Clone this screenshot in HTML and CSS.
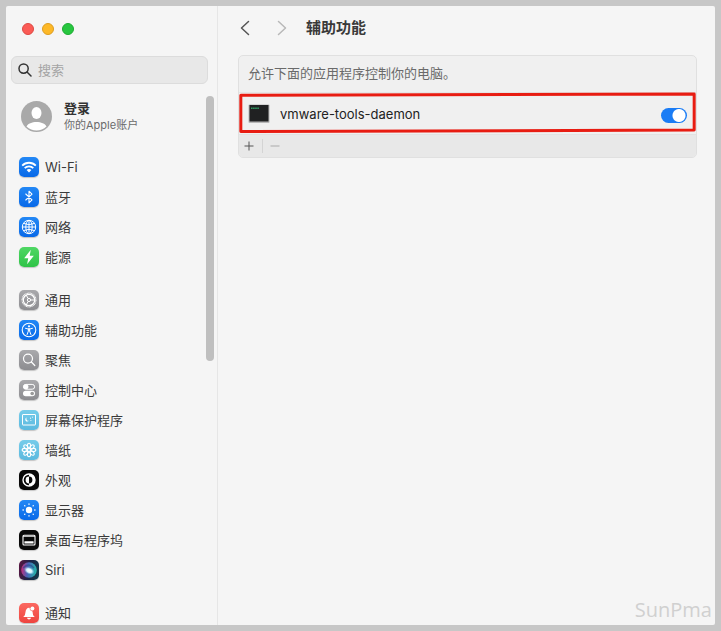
FILE: index.html
```html
<!DOCTYPE html>
<html lang="zh-CN">
<head>
    <meta charset="UTF-8">
    <meta name="viewport" content="width=device-width, initial-scale=1.0">
    <title>辅助功能</title>
    <link rel="stylesheet" href="styles.css">
</head>
<body>
    <div class="window">
        <aside class="sidebar">
            <div class="lights">
                <button class="light red" aria-label="关闭"></button>
                <button class="light yellow" aria-label="最小化"></button>
                <button class="light green" aria-label="缩放"></button>
            </div>

            <label class="search">
                <svg width="14" height="14" viewBox="0 0 14 14" fill="none" stroke="#333" stroke-width="1.5" stroke-linecap="round"><circle cx="5.6" cy="5.6" r="4.6"/><path d="M9 9l4 4"/></svg>
                <input type="search" placeholder="搜索" aria-label="搜索">
            </label>

            <div class="list">
                <a class="account" href="#">
                    <svg width="31" height="31" viewBox="0 0 31 31">
                        <circle cx="15.5" cy="15.5" r="15.5" fill="#a9a9a9"/>
                        <ellipse cx="15.5" cy="12" rx="5" ry="6" fill="#fff"/>
                        <path d="M5.5 25.5C8 19.500 23 19.500 25.500 25.500C20 30.700 11 30.700 5.500 25.500z" fill="#fff"/>
                    </svg>
                    <span class="account-text">
                        <b>登录</b>
                        <small>你的Apple账户</small>
                    </span>
                </a>

                <nav class="group">
                    <a class="item" href="#">
                        <svg class="icon blue" viewBox="0 0 20 20" fill="none" stroke="#fff" stroke-width="1.8"><path d="M3.200 8.600a9.500 9.500 0 0 1 13.600 0M5.700 11.200a6 6 0 0 1 8.600 0"/><path d="M10 15.600l-2.400-2.500a3.400 3.400 0 0 1 4.800 0z" fill="#fff" stroke="none"/></svg>
                        <span>Wi-Fi</span>
                    </a>
                    <a class="item" href="#">
                        <svg class="icon blue" viewBox="0 0 20 20" fill="none" stroke="#fff" stroke-width="1.100" stroke-linejoin="round" stroke-linecap="round"><path d="M6.800 7l6.200 5.900-3 2.900V4.200l3 2.900L6.800 13"/></svg>
                        <span>蓝牙</span>
                    </a>
                    <a class="item" href="#">
                        <svg class="icon blue" viewBox="0 0 20 20" fill="none" stroke="#fff" stroke-width="1"><circle cx="10" cy="10" r="6.700"/><ellipse cx="10" cy="10" rx="3.200" ry="6.700"/><path d="M10 3.300v13.400M3.300 10h13.400M4.500 6.400q5.500 2.600 11 0M4.500 13.600q5.500-2.600 11 0"/></svg>
                        <span>网络</span>
                    </a>
                    <a class="item" href="#">
                        <svg class="icon lime" viewBox="0 0 20 20" fill="#fff"><path d="M11.800 2.800L5.200 11.200h4l-1.100 6L14.800 8.800h-4.100z"/></svg>
                        <span>能源</span>
                    </a>
                </nav>

                <nav class="group">
                    <a class="item" href="#">
                        <svg class="icon gray" viewBox="0 0 20 20" fill="none" stroke="#fff"><circle cx="10" cy="10" r="6.900" stroke-width="1.100" stroke-dasharray="0.900 0.540"/><circle cx="10" cy="10" r="5.700" stroke-width="1.200"/><circle cx="10" cy="10" r="1.600"/><path d="M11.600 10h4M9.200 8.600L7.200 5.100M9.200 11.400l-2 3.500"/></svg>
                        <span>通用</span>
                    </a>
                    <a class="item" href="#">
                        <svg class="icon blue" viewBox="0 0 20 20" fill="none" stroke="#fff" stroke-linecap="round"><circle cx="10" cy="10" r="6.800" stroke-width="1.100"/><circle cx="10" cy="6.300" r="1.100" fill="#fff" stroke="none"/><path d="M6.500 8.300l2.400.6h2.200l2.400-.6M9.300 9v2.200l-1.200 3.300M10.700 9v2.200l1.200 3.300M10 9v2"/></svg>
                        <span>辅助功能</span>
                    </a>
                    <a class="item" href="#">
                        <svg class="icon gray" viewBox="0 0 20 20" fill="none" stroke="#fff" stroke-width="1.200" stroke-linecap="round"><circle cx="9" cy="8.600" r="4.500"/><path d="M12.400 12l3.400 3.500"/></svg>
                        <span>聚焦</span>
                    </a>
                    <a class="item" href="#">
                        <svg class="icon gray" viewBox="0 0 20 20"><rect x="4.400" y="4.400" width="11.200" height="4.800" rx="2.400" fill="none" stroke="#fff"/><circle cx="6.900" cy="6.800" r="2.500" fill="#fff"/><rect x="4" y="10.800" width="12" height="5.400" rx="2.700" fill="#fff"/><circle cx="13.200" cy="13.500" r="1.800" fill="#999"/></svg>
                        <span>控制中心</span>
                    </a>
                    <a class="item" href="#">
                        <svg class="icon sky" viewBox="0 0 20 20" fill="none" stroke="#fff"><rect x="3.500" y="4.500" width="13" height="10.500" rx="0.500"/><path d="M7.700 7.500a2.100 2.100 0 1 0 2.300 3.300 2.200 2.200 0 0 1-2.300-3.300z" fill="#fff" stroke="none"/><path d="M11 8.200h1M13 7.200h.8M11.500 10.500h.8"/></svg>
                        <span>屏幕保护程序</span>
                    </a>
                    <a class="item" href="#">
                        <svg class="icon sky" viewBox="0 0 20 20" fill="none" stroke="#fff" stroke-width="1.100"><circle cx="10" cy="10" r="1.500"/><g><ellipse cx="10" cy="5.700" rx="1.600" ry="2.500"/><ellipse cx="10" cy="14.300" rx="1.600" ry="2.500"/><ellipse cx="5.700" cy="10" rx="2.500" ry="1.600"/><ellipse cx="14.300" cy="10" rx="2.500" ry="1.600"/></g><g transform="rotate(45 10 10)"><ellipse cx="10" cy="5.700" rx="1.600" ry="2.500"/><ellipse cx="10" cy="14.300" rx="1.600" ry="2.500"/><ellipse cx="5.700" cy="10" rx="2.500" ry="1.600"/><ellipse cx="14.300" cy="10" rx="2.500" ry="1.600"/></g></svg>
                        <span>墙纸</span>
                    </a>
                    <a class="item" href="#">
                        <svg class="icon black" viewBox="0 0 20 20"><circle cx="10" cy="10" r="6" fill="none" stroke="#fff" stroke-width="1.400"/><path d="M10 4a6 6 0 0 1 0 12v-2.600a3.400 3.400 0 0 0 0-6.800z" fill="#fff"/><path d="M10 6.600a3.400 3.400 0 0 0 0 6.800z" fill="#fff"/></svg>
                        <span>外观</span>
                    </a>
                    <a class="item" href="#">
                        <svg class="icon blue" viewBox="0 0 20 20" stroke="#fff" stroke-width="1.300" stroke-linecap="round"><circle cx="10" cy="10" r="3.200" fill="#fff" stroke="none"/><path d="M10 4v.3M10 15.700v.3M4 10h.3M15.700 10h.3M5.700 5.700l.2.200M14.100 14.100l.2.200M5.700 14.300l.2-.2M14.100 5.900l.2-.2"/></svg>
                        <span>显示器</span>
                    </a>
                    <a class="item" href="#">
                        <svg class="icon black" viewBox="0 0 20 20"><rect x="4" y="5.200" width="12" height="9.800" rx="1" fill="none" stroke="#fff" stroke-width="1.100"/><path d="M4 6.500h12" stroke="#fff" stroke-width="0.700"/><rect x="5.400" y="11.200" width="9.200" height="2.400" rx="0.500" fill="#fff"/></svg>
                        <span>桌面与程序坞</span>
                    </a>
                    <a class="item" href="#">
                        <svg class="icon siri" viewBox="0 0 20 20">
                            <defs>
                                <linearGradient id="orb" x1="0" y1="0.500" x2="1" y2="0.600"><stop offset="0" stop-color="#c22e7c"/><stop offset="0.400" stop-color="#4a62b8"/><stop offset="1" stop-color="#22b9a8"/></linearGradient>
                                <radialGradient id="glow"><stop offset="0" stop-color="#fff"/><stop offset="0.500" stop-color="#d7f3ff"/><stop offset="1" stop-color="#8fdcf5" stop-opacity="0"/></radialGradient>
                            </defs>
                            <circle cx="10" cy="10" r="7.800" fill="url(#orb)"/>
                            <path d="M4 8q6-6 11 0" fill="none" stroke="#254a8c" stroke-width="1.500" opacity=".6"/>
                            <ellipse cx="10.500" cy="10.500" rx="5.500" ry="3.600" fill="url(#glow)" transform="rotate(25 10 10)"/>
                        </svg>
                        <span>Siri</span>
                    </a>
                </nav>

                <nav class="group">
                    <a class="item" href="#">
                        <svg class="icon coral" viewBox="0 0 20 20" fill="#fff"><path d="M4.200 14c1.800-1.300 1.900-2.600 2.300-5 .3-2.600 1.600-4.200 3.500-4.200s3.300 1.600 3.600 4.200c.3 2.400.4 3.700 2.200 5z"/><path d="M7.900 14.800h4.200q-.5 1.800-2.100 1.800t-2.100-1.800z"/><circle cx="13.400" cy="5.500" r="2.200"/><circle cx="13.400" cy="5.500" r="2.400" fill="none" stroke="#f5554e" stroke-width="0.600"/></svg>
                        <span>通知</span>
                    </a>
                </nav>
            </div>
            <div class="thumb"></div>
        </aside>

        <main class="content">
            <header class="toolbar">
                <button class="nav-btn" aria-label="返回"><svg width="10" height="16" viewBox="0 0 10 16"><path d="M8.500 1.500L1.500 8l7 6.500"/></svg></button>
                <button class="nav-btn next" aria-label="前进" disabled><svg width="10" height="16" viewBox="0 0 10 16"><path d="M1.500 1.500l7 6.500-7 6.500"/></svg></button>
                <h1>辅助功能</h1>
            </header>

            <section class="card">
                <p class="note">允许下面的应用程序控制你的电脑。</p>
                <div class="app">
                    <svg width="22" height="20" viewBox="0 0 22 20"><rect x="0.500" y="0.500" width="21" height="18.500" rx="1" fill="#b8b8b8"/><rect x="1.500" y="1" width="19" height="16.500" fill="#202122"/><path d="M3 4.200h8" stroke="#2f9a62" stroke-width="1.500" stroke-dasharray="1.600 .5"/></svg>
                    <label for="daemon">vmware-tools-daemon</label>
                    <input class="switch" type="checkbox" id="daemon" checked>
                    <!-- hand-drawn marker box over the row -->
                    <svg class="marker" viewBox="0 0 100 100" preserveAspectRatio="none"><path d="M0.400 6L99.600 2.500V95L0.400 99z" vector-effect="non-scaling-stroke"/></svg>
                </div>
                <div class="actions">
                    <button aria-label="添加"><svg width="10" height="10" viewBox="0 0 10 10"><path d="M5 .5v9M.5 5h9"/></svg></button>
                    <button class="remove" aria-label="移除" disabled><svg width="10" height="10" viewBox="0 0 10 10"><path d="M.5 5h9"/></svg></button>
                </div>
            </section>
        </main>
        <div class="watermark">SunPma</div>
    </div>
</body>
</html>
```
FILE: styles.css
```css
* {
    box-sizing: border-box;
}

body {
    margin: 0;
    padding: 6px;
    height: 100vh;
    background: #c7c7c7;
    color: #3a3a3a;
    font-family: Inter, "Noto Sans CJK SC", sans-serif;
    font-size: 13px;
    line-height: 20px;
}

button {
    padding: 0;
    border: 0;
    background: none;
}

svg {
    display: block;
    flex: none;
}

.window {
    position: relative;
    display: flex;
    height: 100%;
    overflow: hidden;
    border-radius: 2px;
    background: #f5f5f5;
}

/* Sidebar */
.sidebar {
    position: relative;
    display: flex;
    flex-direction: column;
    flex: none;
    width: 212px;
    padding: 17px 9px 0 5px;
    border-right: 1px solid #e6e6e6;
}

.lights {
    display: flex;
    gap: 8px;
    padding-left: 11px;
    margin-bottom: 21px;
}

.light {
    width: 12px;
    height: 12px;
    border-radius: 50%;
}

.red {
    background: #fb5b55;
    border: 1px solid #dd4943;
}

.yellow {
    background: #fdb827;
    border: 1px solid #dd9d20;
}

.green {
    background: #27c63f;
    border: 1px solid #1dab31;
}

.search {
    display: flex;
    align-items: center;
    gap: 6px;
    flex: none;
    height: 28px;
    padding: 0 6px;
    border: 1px solid #dcdcdc;
    border-radius: 6px;
    background: #e8e8e8;
}

.search input {
    flex: 1;
    min-width: 0;
    padding: 0;
    border: 0;
    outline: 0;
    background: none;
    font: inherit;
}

.search input::placeholder {
    color: #a4a4a4;
}

.list {
    flex: 1;
    min-height: 0;
    overflow: hidden;
    padding: 15px 8px 0;
}

.account {
    display: flex;
    align-items: center;
    gap: 12px;
    padding-left: 2px;
    margin-bottom: 19px;
    color: #333;
    text-decoration: none;
}

.account-text {
    display: flex;
    flex-direction: column;
}

.account b {
    line-height: 18px;
}

.account small {
    color: #6b6b6b;
    font-size: 11px;
    line-height: 16px;
}

.group {
    margin-bottom: 13px;
}

.item {
    display: flex;
    align-items: center;
    gap: 6px;
    height: 30px;
    color: #3a3a3a;
    text-decoration: none;
}

.icon {
    width: 20px;
    height: 20px;
    border-radius: 5px;
    box-shadow: 0 1px 1px rgba(0, 0, 0, 0.2);
}

.blue {
    background: linear-gradient(#2388f5, #0869e8);
}

.lime {
    background: linear-gradient(#4fd764, #2fc348);
}

.gray {
    background: linear-gradient(#a9a9ac, #8c8c90);
}

.sky {
    background: linear-gradient(#76ccea, #5bb9df);
}

.black {
    background: #090909;
}

.siri {
    background: linear-gradient(100deg, #5d1540, #1b2348 50%, #123c4b);
}

.coral {
    background: linear-gradient(#fb6961, #ee443f);
}

.thumb {
    position: absolute;
    top: 90px;
    right: 3px;
    width: 8px;
    height: 265px;
    border-radius: 4px;
    background: #bfbfbf;
}

/* Right pane */
.content {
    flex: 1;
    min-width: 0;
    padding: 10px 18px 0 20px;
}

.toolbar {
    display: flex;
    align-items: center;
    height: 24px;
    margin-bottom: 15px;
}

.nav-btn {
    padding: 0 2px;
    margin-right: 23px;
}

.nav-btn path {
    fill: none;
    stroke: #555;
    stroke-width: 1.5;
    stroke-linecap: round;
    stroke-linejoin: round;
}

.next {
    margin-right: 17px;
}

.next path {
    stroke: #b8b8b8;
}

h1 {
    margin: 0;
    font-size: 15px;
    line-height: 24px;
}

.card {
    border: 1px solid #e0e0e0;
    border-radius: 5px;
    background: #f0f0f0;
}

.note {
    margin: 0;
    padding: 7px 9px 9px;
    border-bottom: 1px solid #e5e5e5;
    color: #6a6a6a;
}

.app {
    position: relative;
    display: flex;
    align-items: center;
    gap: 10px;
    height: 41px;
    padding: 0 9px;
}

.app label {
    flex: 1;
    color: #222;
}

.marker {
    position: absolute;
    top: 0;
    left: 0;
    width: 100%;
    height: 39px;
    overflow: visible;
    pointer-events: none;
}

.marker path {
    fill: none;
    stroke: #e81c12;
    stroke-width: 3;
    stroke-linejoin: round;
}

.switch {
    appearance: none;
    width: 26px;
    height: 15px;
    margin: 4px 0 0;
    border-radius: 8px;
    background: radial-gradient(circle at 18px 50%, #fff 6px, #1a7cf5 7px);
}

.actions {
    display: flex;
    align-items: center;
    height: 23px;
    border-top: 1px solid #e2e2e2;
    border-radius: 0 0 4px 4px;
    background: #e8e8e8;
}

.actions button {
    padding: 2px 8px 2px 5px;
}

.actions .remove {
    padding-left: 7px;
    border-left: 1px solid #d4d4d4;
}

.actions path {
    stroke: #555;
}

.actions .remove path {
    stroke: #aaa;
}

.watermark {
    position: absolute;
    right: 3px;
    bottom: 1px;
    color: #d0d0d0;
    font-family: "Open Sans", sans-serif;
    font-size: 20px;
    line-height: 28px;
}
```
